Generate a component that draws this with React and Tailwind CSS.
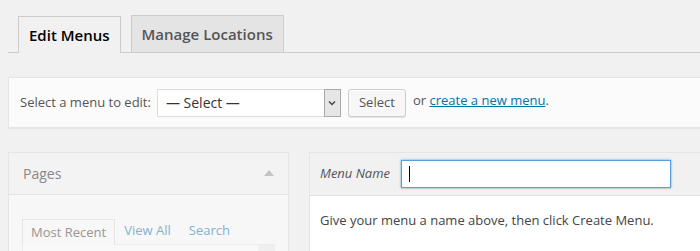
import { useState } from 'react';

const font = { fontFamily: '"Open Sans", "Noto Sans", sans-serif' };

const App = () => {
  const [menuName, setMenuName] = useState('');

  return (
    <div className="w-[700px] h-[251px] overflow-hidden bg-[#f1f1f1] text-[13px] text-[#444]" style={font}>
      <div className="pl-2">
        {/* nav tabs */}
        <div className="flex items-end gap-[10px] pl-[10px] pt-[15px] border-b border-[#ccc]">
          <div className="h-[37px] px-[10px] flex items-center border border-b-0 border-[#ccc] bg-[#f1f1f1] -mb-px text-[15px] font-semibold text-black">
            Edit Menus
          </div>
          <div className="h-[37px] px-[10px] flex items-center border border-b-0 border-[#ccc] bg-[#e4e4e4] text-[15px] font-semibold text-[#555]">
            Manage Locations
          </div>
        </div>

        {/* select menu bar */}
        <div className="mt-6 -mr-4 h-[51px] flex items-center pl-[11px] bg-[#fbfbfb] border border-[#e5e5e5] shadow-[0_1px_1px_rgba(0,0,0,0.04)]">
          <span className="text-[#555]">Select a menu to edit:</span>
          <div className="ml-[6px] w-[184px] h-[28px] flex items-stretch border border-[#ddd] bg-white">
            <span className="flex-1 flex items-center pl-[8px] text-[14px] text-[#333]">— Select —</span>
            <span className="w-[17px] flex items-center justify-center bg-[#e6e6e6] border border-[#aaa] -my-px -mr-px">
              <svg width="8" height="6" viewBox="0 0 8 6">
                <path d="M1 1.5 L4 4.5 L7 1.5" fill="none" stroke="#444" strokeWidth="1.4" />
              </svg>
            </span>
          </div>
          <button className="ml-[7px] h-[28px] w-[58px] rounded-[3px] border border-[#ccc] bg-[#f7f7f7] text-[#555] shadow-[0_1px_0_#fff_inset,0_1px_0_rgba(0,0,0,0.08)]">
            Select
          </button>
          <span className="ml-[7px] -mt-[3px] text-[#555]">
            or{' '}
            <a href="#" className="text-[#0073aa] underline">create a new menu</a>.
          </span>
        </div>

        {/* columns */}
        <div className="mt-6 flex gap-5">
          <div className="w-[281px] shrink-0 border border-[#e5e5e5] bg-[#f7f7f7]">
            <div className="h-[42px] flex items-center justify-between px-[14px] bg-[#f3f3f3] border-b border-[#e5e5e5]">
              <span className="text-[14px] text-[#888] -mt-px">Pages</span>
              <svg width="10" height="7" viewBox="0 0 10 7" className="-mt-[2px]">
                <path d="M0 7 L5 1 L10 7 Z" fill="#c4c4c4" />
              </svg>
            </div>
            <div className="px-[13px] pt-[23px]">
              <div className="flex items-end">
                <div className="h-[26px] px-[8px] flex items-center border border-b-0 border-[#e5e5e5] bg-[#f7f7f7] text-[#9a9590] -mb-px relative z-10">
                  Most Recent
                </div>
                <span className="ml-[9px] h-[26px] flex items-center text-[#7fb3d3]">View All</span>
                <span className="ml-[18px] h-[26px] flex items-center text-[#7fb3d3]">Search</span>
              </div>
              <div className="w-[253px] h-[20px] border border-[#ececec] bg-[#f9f9f9] flex justify-end">
                <div className="w-[16px] bg-[#efefef]" />
              </div>
            </div>
          </div>

          <div className="flex-1 -mr-4 border border-[#e5e5e5] bg-white">
            <div className="h-[43px] flex items-center pl-[10px] bg-[#f1f1f1] border-b border-[#dfdfdf]">
              <label className="italic text-[#555]">Menu Name</label>
              <div className="relative ml-[11px]">
                <input
                  autoFocus
                  value={menuName}
                  onChange={(e) => setMenuName(e.target.value)}
                  className="w-[270px] h-[28px] px-[6px] bg-white border border-[#5b9dd9] shadow-[0_0_2px_rgba(30,140,190,0.8)] outline-none text-[14px] text-black caret-black"
                  style={font}
                />
                {menuName === '' && (
                  <span className="pointer-events-none absolute left-[8px] top-[6px] w-px h-[16px] bg-black" />
                )}
              </div>
            </div>
            <div className="pl-[10px] pt-[15px] text-[#444]">
              Give your menu a name above, then click Create Menu.
            </div>
          </div>
        </div>
      </div>
    </div>
  );
};

export default App;
